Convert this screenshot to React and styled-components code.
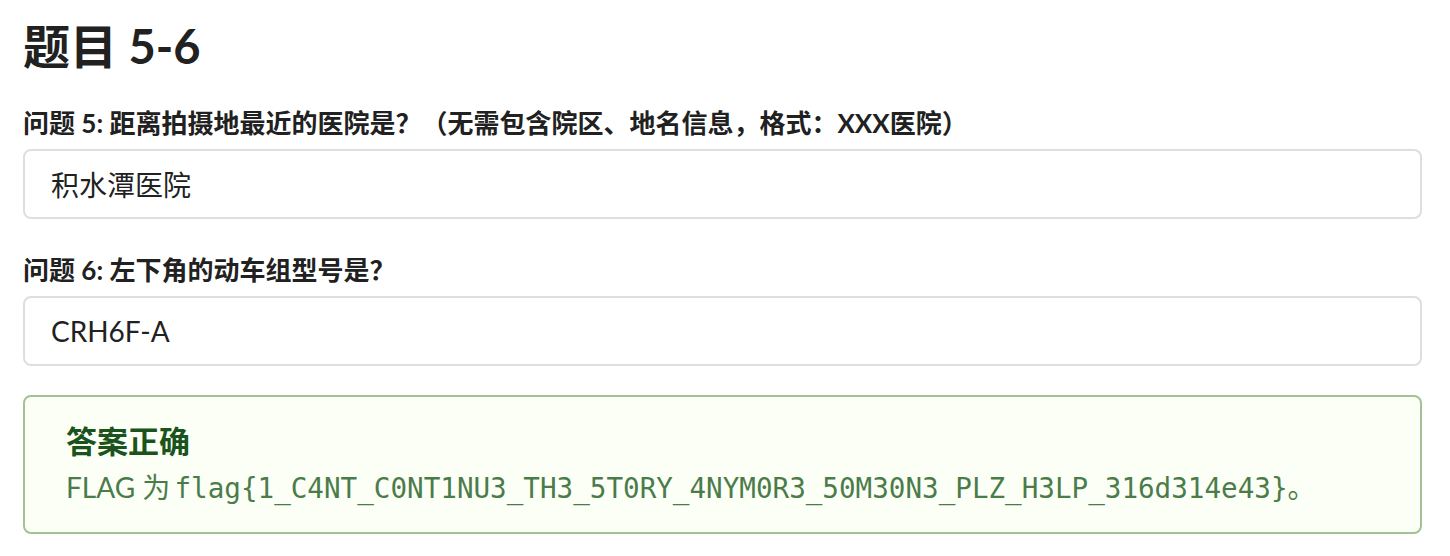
import styled, { createGlobalStyle } from "styled-components";

const GlobalStyle = createGlobalStyle`
  html, body {
    margin: 0;
    padding: 0;
    background: #ffffff;
  }
  body {
    font-family: Lato, "Noto Sans CJK SC", sans-serif;
    color: rgba(0, 0, 0, 0.87);
  }
`

const Page = styled.div`
  padding: 18px 28px 20px 23px;
  display: flex;
  flex-direction: column;
`

const Title = styled.h1`
  margin: 0;
  font-size: 47px;
  line-height: 56px;
  font-weight: 700;
  color: #212121;
`

const Field = styled.div`
  display: flex;
  flex-direction: column;
  gap: 10px;
  margin-top: ${props => props.gap || 34}px;
`

const Label = styled.label`
  font-size: 26px;
  line-height: 32px;
  font-weight: 700;
  color: #212121;
`

const Input = styled.input`
  box-sizing: border-box;
  width: 100%;
  height: 70px;
  margin: 0;
  padding: 0 26px;
  border: 2px solid #dedede;
  border-radius: 8px;
  background: #ffffff;
  font-family: Lato, "Noto Sans CJK SC", sans-serif;
  font-size: 28px;
  color: #212121;
  outline: none;
`

const Message = styled.div`
  box-sizing: border-box;
  margin-top: 29px;
  height: 139px;
  padding: 26px 41px;
  border: 2px solid #a3c293;
  border-radius: 8px;
  background: #fcfff5;
  display: flex;
  flex-direction: column;
  gap: 8px;
`

const MessageHeader = styled.div`
  font-size: 31px;
  line-height: 36px;
  font-weight: 700;
  color: #1a531b;
`

const MessageText = styled.p`
  margin: 0;
  font-size: 28px;
  line-height: 40px;
  color: #2c662d;
  opacity: 0.85;
`

const Code = styled.code`
  font-family: "DejaVu Sans Mono", "Noto Sans CJK SC", monospace;
  font-size: 27.6px;
  margin-left: -3px;
`

const questions = [
  {
    label: "问题 5: 距离拍摄地最近的医院是？（无需包含院区、地名信息，格式：XXX医院）",
    value: "积水潭医院",
  },
  {
    label: "问题 6: 左下角的动车组型号是？",
    value: "CRH6F-A",
  },
]

export default function App() {
  return (
    <>
      <GlobalStyle />
      <Page>
        <Title>题目 5-6</Title>
        {questions.map((q, i) => (
          <Field key={i} gap={i === 0 ? 33 : 35}>
            <Label>{q.label}</Label>
            <Input readOnly defaultValue={q.value} />
          </Field>
        ))}
        <Message>
          <MessageHeader>答案正确</MessageHeader>
          <MessageText>
            FLAG 为 <Code>flag{"{"}1_C4NT_C0NT1NU3_TH3_5T0RY_4NYM0R3_50M30N3_PLZ_H3LP_316d314e43{"}"}</Code>。
          </MessageText>
        </Message>
      </Page>
    </>
  )
}
